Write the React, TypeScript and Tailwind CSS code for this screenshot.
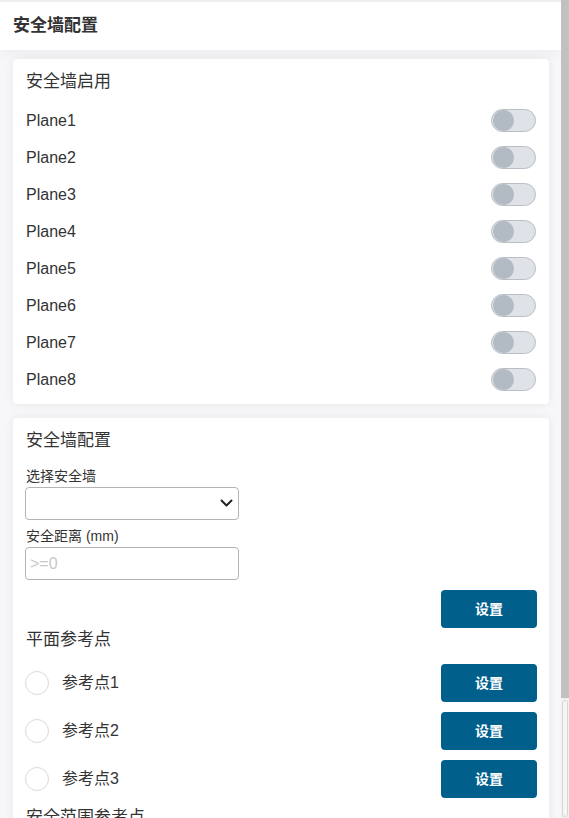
import { useState } from 'react'

const planes = ['Plane1', 'Plane2', 'Plane3', 'Plane4', 'Plane5', 'Plane6', 'Plane7', 'Plane8']

const font = { fontFamily: '"Liberation Sans", Arial, "Noto Sans CJK SC", sans-serif' }

export default function App() {
  const [enabled, setEnabled] = useState<boolean[]>(planes.map(() => false))

  return (
    <div style={font} className="flex h-screen bg-[#f7f7f9] text-[#333]">
      <div className="min-w-0 flex-1 overflow-hidden">
        <header className="border-t-2 border-[#eeeeee] bg-white px-[13px] pt-[13px] pb-[13px] shadow-[0_4px_10px_rgba(0,0,0,0.04)]">
          <h1 className="text-[17px] font-bold leading-[22px] text-[#333]">安全墙配置</h1>
        </header>

        <main className="flex flex-col gap-[14px] pl-[13px] pr-[12px] pt-[9px] pb-[13px]">
          <section className="rounded-[4px] bg-white px-[13px] pt-[11px] pb-[6px] shadow-[0_0_10px_rgba(0,0,0,0.07)]">
            <h2 className="text-[17px] leading-[24px]">安全墙启用</h2>
            <div className="mt-[8px]">
              {planes.map((p, i) => (
                <div key={p} className="flex h-[37px] items-center justify-between">
                  <span className="text-[16px]">{p}</span>
                  <Toggle
                    on={enabled[i]}
                    onChange={() => setEnabled(enabled.map((v, j) => (j === i ? !v : v)))}
                  />
                </div>
              ))}
            </div>
          </section>

          <section className="rounded-[4px] bg-white pl-[12px] pr-[12px] pt-[11px] pb-[12px] shadow-[0_0_10px_rgba(0,0,0,0.07)]">
            <h2 className="pl-[1px] text-[17px] leading-[24px]">安全墙配置</h2>

            <label className="mt-[14px] block pl-[1px] text-[14px] leading-[18px]">选择安全墙</label>
            <div className="relative mt-[2px] w-[214px]">
              <select className="h-[33px] w-full appearance-none rounded-[4px] border border-[#b4b4b4] bg-white px-2 text-[14px] outline-none" />
              <svg
                className="pointer-events-none absolute right-[6px] top-[11px]"
                width="13"
                height="10"
                viewBox="0 0 13 10"
                fill="none"
              >
                <path d="M1.5 2.5 6.5 7.5 11.5 2.5" stroke="#222" strokeWidth="2" strokeLinecap="round" strokeLinejoin="round" />
              </svg>
            </div>

            <label className="mt-[7px] block pl-[1px] text-[14px] leading-[18px]">安全距离 (mm)</label>
            <input
              placeholder=">=0"
              className="mt-[2px] h-[33px] w-[214px] rounded-[4px] border border-[#b4b4b4] px-[4px] text-[16px] outline-none placeholder:text-[#c8c8c8]"
            />

            <div className="mt-[10px] flex justify-end">
              <SetButton />
            </div>

            <h2 className="pl-[1px] text-[17px] leading-[24px]">平面参考点</h2>
            <div className="mt-[12px] flex flex-col gap-[10px]">
              {['参考点1', '参考点2', '参考点3'].map((r) => (
                <RefRow key={r} label={r} />
              ))}
            </div>

            <h2 className="mt-[8px] pl-[1px] text-[17px] leading-[24px]">安全范围参考点</h2>
            <div className="mt-[12px] flex flex-col gap-[10px]">
              {['参考点1', '参考点2'].map((r) => (
                <RefRow key={r} label={r} />
              ))}
            </div>
          </section>
        </main>
      </div>

      {/* scrollbar */}
      <div className="flex w-[8px] flex-col bg-[#f1f1f1]">
        <div className="h-[698px] bg-[#c1c1c1]" />
        <div className="mx-[1px] mt-[2px] mb-[1px] flex-1 rounded-[3px] border border-[#d6d6d6] bg-[#f6f6f6]" />
      </div>
    </div>
  )
}

function Toggle({ on, onChange }: { on: boolean; onChange: () => void }) {
  return (
    <button
      onClick={onChange}
      className={`relative h-[23px] w-[45px] rounded-full border ${
        on ? 'border-[#005f8b] bg-[#005f8b]' : 'border-[#b9bec5] bg-[#dfe2e7]'
      }`}
    >
      <span
        className={`absolute top-[0px] h-[21px] w-[21px] rounded-full ${
          on ? 'left-[22px] bg-white' : 'left-[1px] bg-[#b2bac3]'
        }`}
      />
    </button>
  )
}

function SetButton() {
  return (
    <button className="h-[38px] w-[96px] rounded-[4px] bg-[#005f8b] text-[14px] font-bold text-white">
      设置
    </button>
  )
}

function RefRow({ label }: { label: string }) {
  return (
    <div className="flex h-[38px] items-center">
      <span className="h-[24px] w-[24px] rounded-full border border-[#d9d9d9] bg-white" />
      <span className="ml-[13px] flex-1 text-[16px]">{label}</span>
      <SetButton />
    </div>
  )
}
